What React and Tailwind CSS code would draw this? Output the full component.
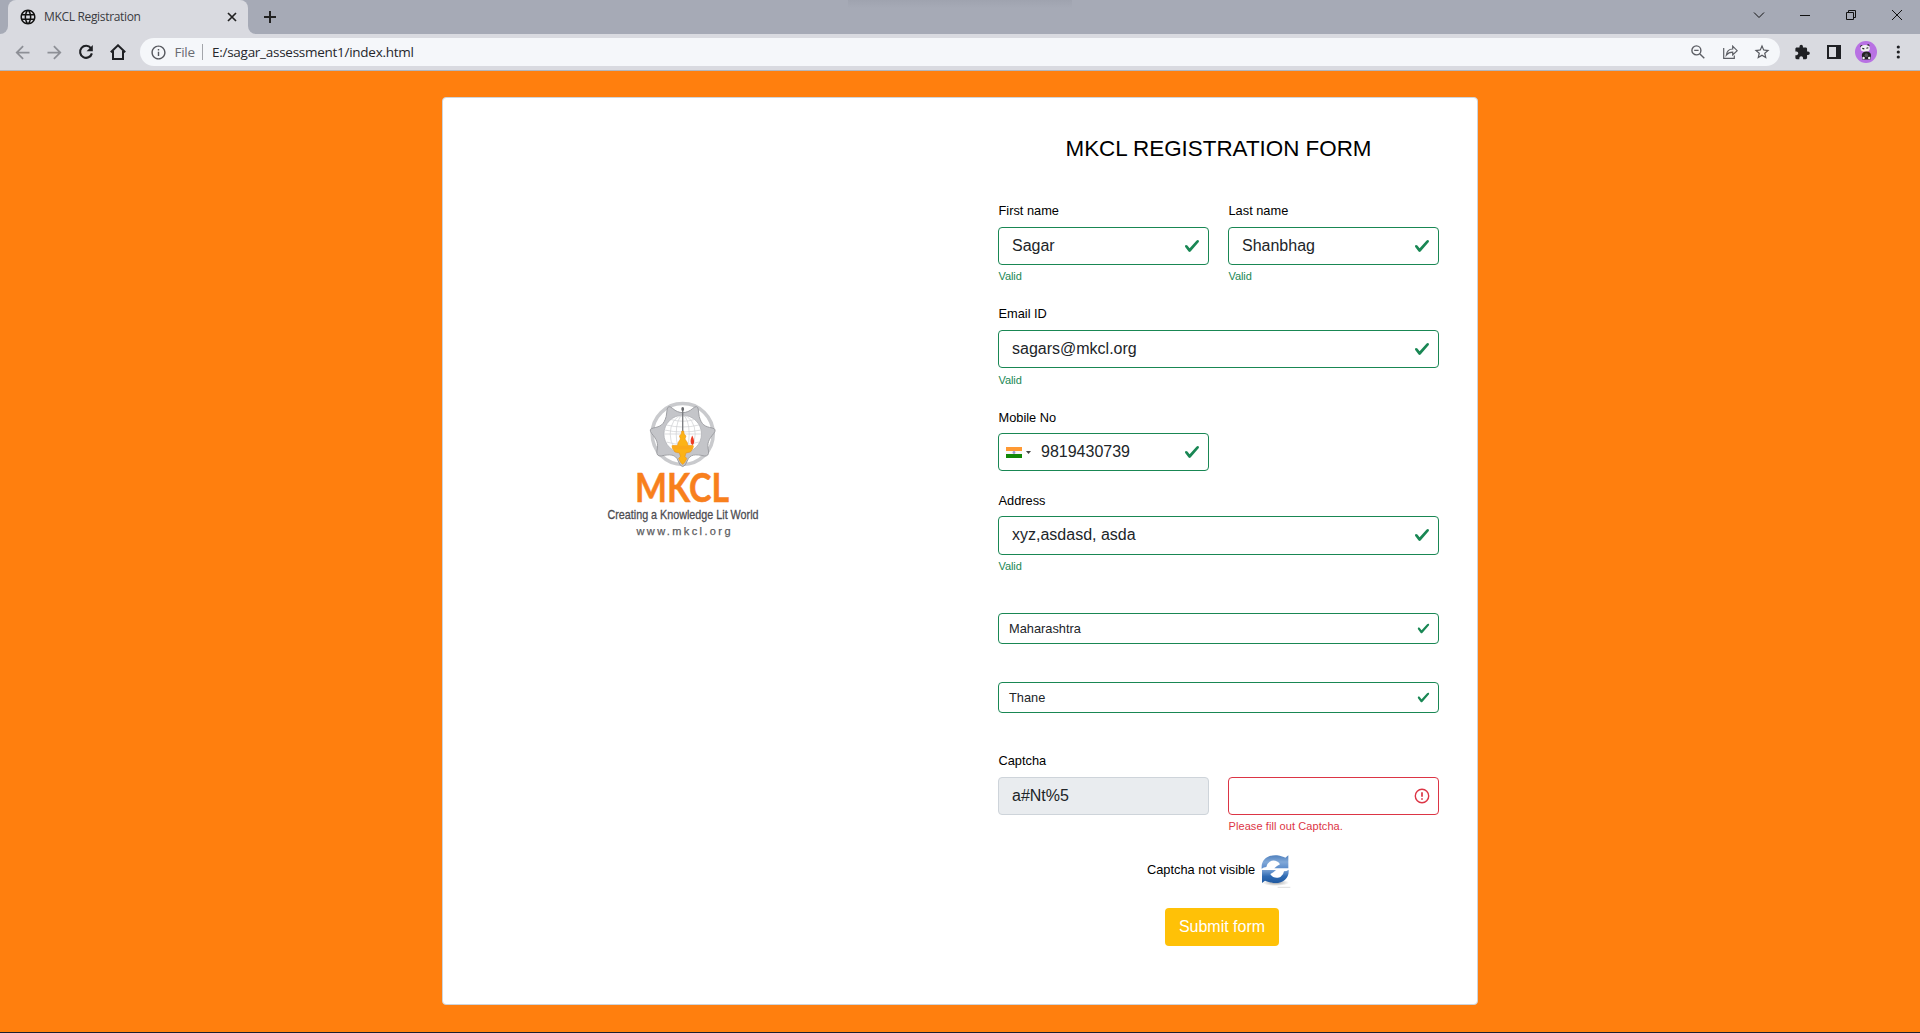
import React from "react";
import {
  MdArrowBack,
  MdArrowForward,
  MdInfoOutline,
  MdLanguage,
  MdStarBorder,
  MdExtension,
} from "react-icons/md";

const UI = "font-['Open_Sans','Noto_Sans',sans-serif]";

function Cell({ children }) {
  return <div className="flex h-7 w-8 shrink-0 items-center justify-center">{children}</div>;
}

function WinCell({ children }) {
  return (
    <div className="flex h-[29px] w-[46px] items-center justify-center">
      <svg width="12" height="12" viewBox="0 0 12 12" fill="none" stroke="#111" strokeWidth="1">
        {children}
      </svg>
    </div>
  );
}

function TabStrip() {
  return (
    <div className="flex h-[34px] items-start bg-[#a6aab6]">
      <div className="h-[34px] w-2 bg-[#d9dae0]">
        <div className="h-[34px] w-2 rounded-br-lg bg-[#a6aab6]" />
      </div>
      <div className="flex h-[34px] w-[240px] items-center rounded-t-lg bg-[#d9dae0] pl-[11px] pr-[10px]">
        <MdLanguage size={18} className="text-[#111]" />
        <span className="ml-[7px] text-[12px] leading-4 tracking-[-0.33px] text-[#3a3b40]">MKCL Registration</span>
        <svg className="ml-auto" width="12" height="12" viewBox="0 0 12 12" stroke="#222" strokeWidth="1.7">
          <path d="M2 2l8 8M10 2l-8 8" />
        </svg>
      </div>
      <div className="h-[34px] w-2 bg-[#d9dae0]">
        <div className="h-[34px] w-2 rounded-bl-lg bg-[#a6aab6]" />
      </div>
      <svg className="ml-2 mt-[11px]" width="12" height="12" viewBox="0 0 12 12" stroke="#222" strokeWidth="2">
        <path d="M6 0v12M0 6h12" />
      </svg>
      <div className="ml-[572px] h-2 w-[224px] bg-linear-to-b from-[#9fa3af] to-[#a6aab6]" />
      <div className="ml-auto flex">
        <WinCell>
          <path d="M1 3.5l5 5 5-5" />
        </WinCell>
        <WinCell>
          <path d="M1 6.5h10" />
        </WinCell>
        <WinCell>
          <path d="M1.5 3.5h7v7h-7zM3.5 3.5v-2h7v7h-2" />
        </WinCell>
        <WinCell>
          <path d="M1 1l10 10M11 1l-10 10" />
        </WinCell>
      </div>
    </div>
  );
}

function Avatar() {
  return (
    <svg width="22" height="22" viewBox="0 0 22 22">
      <circle cx="11" cy="11" r="11" fill="#b871e3" />
      <circle cx="6.6" cy="5.2" r="1.2" fill="#222" />
      <circle cx="13.2" cy="4.4" r="1.2" fill="#222" />
      <ellipse cx="10.2" cy="7.4" rx="4.6" ry="3.3" fill="#f1f1f1" />
      <path d="M7.3 7.4l2 .5M11.4 7.2l1.9-.4" stroke="#222" strokeWidth="1.1" />
      <path d="M6.800 14q.4-3.600 4.600-3.600t4.600 3.600l-.6 4.500H7.400z" fill="#222" />
      <ellipse cx="11.400" cy="14.200" rx="1.700" ry="2" fill="#55505a" />
      <circle cx="8.600" cy="17" r="1.200" fill="#eee" />
      <circle cx="14.200" cy="17" r="1.200" fill="#eee" />
    </svg>
  );
}

function Toolbar() {
  return (
    <div className="flex h-[37px] border-b border-[#b3b5bb] bg-[#d9dae0] px-[6px] pt-1">
      <Cell><MdArrowBack size={21} className="text-[#8d8f96]" /></Cell>
      <Cell><MdArrowForward size={21} className="text-[#8d8f96]" /></Cell>
      <Cell>
        <svg width="16" height="16" viewBox="0 0 16 16" fill="none">
          <path d="M12.900 4.200A6 6 0 1 0 13.900 9.400" stroke="#1f2024" strokeWidth="2.100" />
          <path d="M14.800 1v6.200H8.600z" fill="#1f2024" />
        </svg>
      </Cell>
      <Cell>
        <svg width="16" height="16" viewBox="0 0 16 16" fill="none" stroke="#1f2024" strokeWidth="2">
          <path d="M.8 8.200L8 1.300l7.200 6.900M3 7v8h10V7" />
        </svg>
      </Cell>
      <div className="ml-[6px] flex h-7 w-[1640px] items-center rounded-full bg-[#f5f7fa] pl-[9.500px] pr-0.5">
        <MdInfoOutline size={17} className="text-[#55575d]" />
        <span className="ml-2 mt-px w-[27.500px] text-[13.500px] tracking-[-0.300px] text-[#6a6c72]">File</span>
        <div className="h-4 w-px bg-[#a3a5aa]" />
        <span className="ml-[9px] mt-px text-[13.500px] tracking-[-0.270px] text-[#26272b]">E:/sagar_assessment1/index.html</span>
        <div className="ml-auto flex">
          <Cell>
            <svg width="14" height="14" viewBox="0 0 14 14" fill="none" stroke="#5c5e64" strokeWidth="1.400">
              <circle cx="5.400" cy="5.400" r="4.500" />
              <path d="M8.700 8.700L13.300 13.300M3.200 5.400h4.400" />
            </svg>
          </Cell>
          <Cell>
            <svg width="15" height="14" viewBox="0 0 15 14" fill="none" stroke="#5c5e64" strokeWidth="1.200">
              <path d="M.7 3v10.300h10.600V10.500" />
              <path d="M3.300 10.200C3.800 6 6.500 4 9.700 4V1.200l4.500 4.500-4.500 4.200V7.200C7 7.200 5 8 3.300 10.200z" />
            </svg>
          </Cell>
          <Cell><MdStarBorder size={18} className="text-[#55575d]" /></Cell>
        </div>
      </div>
      <div className="ml-[6px] flex">
        <Cell><MdExtension size={16.500} className="text-[#1f2024]" /></Cell>
        <Cell>
          <svg width="14" height="14" viewBox="0 0 14 14">
            <path fillRule="evenodd" fill="#1f2024" d="M0 0h14v14H0zM2 2v10h7V2z" />
          </svg>
        </Cell>
        <Cell><Avatar /></Cell>
        <Cell>
          <svg width="4" height="14" viewBox="0 0 4 14" fill="#1f2024">
            <circle cx="2.300" cy="2" r="1.600" />
            <circle cx="2.300" cy="7" r="1.600" />
            <circle cx="2.300" cy="12" r="1.600" />
          </svg>
        </Cell>
      </div>
    </div>
  );
}

function Logo() {
  return (
    <svg className="overflow-visible" width="160" height="150" viewBox="0 0 160 150">
      {/* wheel */}
      <circle cx="79.700" cy="37" r="30.500" fill="#fff" stroke="#c9cacd" strokeWidth="3.600" />
      {/* seven-pointed star */}
      <path
        fill="#c4c5c9"
        stroke="#97989d"
        strokeWidth="0.900"
        strokeLinejoin="round"
        transform="translate(-0.300 0)"
        d="M80 69.500Q77.500 69.500 75.500 64C73 57 67 57 58.500 59Q53.500 59.500 54.200 54C56 46 54 42.500 49 36.500Q45.500 32 50.500 31C58 29.500 61 28 63.500 19.500L64.500 12Q65.500 7.500 70 11.500C76 17 84 17 90 11.500Q94.500 7.500 95.500 12L96.500 19.500C99 28 102 29.500 109.500 31Q114.500 32 111 36.500C106 42.500 104 46 105.800 54Q106.500 59.500 101.500 59C93 57 87 57 84.500 64Q82.500 69.500 80 69.500Z"
      />
      {/* globe */}
      <circle cx="79.700" cy="37" r="18.800" fill="#fff" stroke="#b1b2b7" strokeWidth="0.800" />
      <g fill="none" stroke="#cfd0d3" strokeWidth="0.700">
        <ellipse cx="79.700" cy="37" rx="12.500" ry="18.500" />
        <ellipse cx="79.700" cy="37" rx="6.500" ry="18.500" />
        <path d="M61.200 37h37M63.500 28q16 4 32.500 0M68 22.500q12 3.500 23.500 0M63.500 45q16 5 32.500 0M61.500 33q18 4 36.500 0" />
      </g>
      {/* lamp */}
      <path d="M79.700 11v24" stroke="#77787c" strokeWidth="1.300" />
      <ellipse cx="79.700" cy="12" rx="1.400" ry="2" fill="#67686c" />
      <path
        fill="#fcb316"
        stroke="#e98b12"
        strokeWidth="0.500"
        d="M78.700 34h2l.5 3 1.800 2-1 3 2.300 3.500.5 3h5.200v2.500l-2.500 4-4.500 1-1 3.500 1.800 2-2.100 4-2 2-2-2-2.100-4 1.800-2-1-3.500-4.500-1-2.500-4V48.500h5.200l.5-3 2.300-3.500-1-3 1.800-2z"
      />
      <path fill="#fba919" d="M68.500 48.700h22.400l-1.500 3.800H70z" />
      <path fill="#ee3b24" d="M89.300 38.500c-1.800 3.500-2.800 7.500.2 9.500 2.700-2 1.500-5.700-.2-9.500z" />
      <text x="32" y="105.200" textLength="94" lengthAdjust="spacingAndGlyphs" fontFamily="Lato, sans-serif" fontWeight="700" fontSize="40" fill="#f8801d" stroke="#f8801d" strokeWidth="0.500">MKCL</text>
      <text x="4.500" y="121.500" textLength="151" lengthAdjust="spacingAndGlyphs" fontFamily="'Liberation Sans', sans-serif" fontSize="13.500" fill="#4c4c50" stroke="#4c4c50" strokeWidth="0.300">Creating a Knowledge Lit World</text>
      <text x="33.500" y="137.500" textLength="94" fontFamily="'Liberation Sans', sans-serif" fontSize="11" fill="#5c5c60" stroke="#5c5c60" strokeWidth="0.250">www.mkcl.org</text>
    </svg>
  );
}

function Check({ small }) {
  return (
    <svg className="shrink-0" width={small ? 13 : 16} height={small ? 13 : 16} viewBox="0 0 8 8">
      <path
        fill="#198754"
        d="M2.300 6.730.6 4.530c-.4-1.040.46-1.400 1.100-.8l1.100 1.400 3.400-3.800c.6-.63 1.600-.27 1.200.7l-4 4.600c-.43.5-.8.4-1.100.1z"
      />
    </svg>
  );
}

function Label({ children, className = "-mt-px h-[21px]" }) {
  return <label className={`block pl-[0.500px] text-[12.800px] leading-5 text-black ${className}`}>{children}</label>;
}

function Hint({ children, className }) {
  return <p className={`pl-[0.500px] text-[11px] leading-4 ${className}`}>{children}</p>;
}

function Field({ label, value, className = "h-[38px]", labelClass, hintClass = "mt-[3px] h-[17px]" }) {
  return (
    <div className="flex-1">
      <Label className={labelClass}>{label}</Label>
      <div className={`mt-[5px] flex items-center justify-between rounded border border-[#198754] pl-[13px] pr-[8.500px] ${className}`}>
        <span className="text-base text-[#212529]">{value}</span>
        <Check />
      </div>
      <Hint className={`tracking-[-0.100px] text-[#198754] ${hintClass}`}>Valid</Hint>
    </div>
  );
}

function Select({ value }) {
  return (
    <div className="mt-[38px] flex h-[31px] items-center justify-between rounded border border-[#198754] pl-[10px] pr-[8.500px]">
      <span className="mt-px text-[12.800px] text-[#212529]">{value}</span>
      <Check small />
    </div>
  );
}

function RefreshIcon() {
  const arrow = "M2 44C0 18 18 2 48 4C60 6 68 9 73 11L82 4V43H40L48 36L57 31C50 18 34 17 26 23Q17 29 16 39Q8 39 2 44Z";
  return (
    <svg width="30" height="34" viewBox="0 0 90 102">
      <defs>
        <linearGradient id="top" x1="0" y1="0" x2="0" y2="1">
          <stop offset="0" stopColor="#4f80bd" />
          <stop offset="0.500" stopColor="#82a9d8" />
          <stop offset="1" stopColor="#5a8bca" />
        </linearGradient>
        <linearGradient id="bottom" x1="0" y1="0" x2="0" y2="1">
          <stop offset="0" stopColor="#2059a0" />
          <stop offset="0.500" stopColor="#2f6bb3" />
          <stop offset="1" stopColor="#7aa3d6" />
        </linearGradient>
        <radialGradient id="shade">
          <stop offset="0" stopColor="#777" stopOpacity="0.700" />
          <stop offset="1" stopColor="#777" stopOpacity="0" />
        </radialGradient>
      </defs>
      <ellipse cx="44" cy="86" rx="40" ry="10" fill="url(#shade)" />
      <path d={arrow} fill="url(#top)" />
      <path d={arrow} fill="url(#bottom)" transform="rotate(180 42.500 45.500)" />
      <path d="M50 100h38" stroke="#dcdcdc" strokeWidth="3" />
    </svg>
  );
}

function RegistrationForm() {
  return (
    <form className="w-[441px]">
      <h1 className="mt-[35px] h-8 text-center text-[22.400px] leading-8 text-black">MKCL REGISTRATION FORM</h1>
      <div className="mt-[37px] flex gap-[19px]">
        <Field label="First name" value="Sagar" />
        <Field label="Last name" value="Shanbhag" />
      </div>
      <div className="mt-5">
        <Field label="Email ID" value="sagars@mkcl.org" hintClass="mt-1 h-4" />
      </div>
      <div className="mt-5">
        <Label className="h-5">Mobile No</Label>
        <div className="mt-[5px] flex h-[38px] w-[211px] items-center rounded border border-[#198754] pl-[7px] pr-[8.500px]">
          <svg width="16" height="11" viewBox="0 0 16 11">
            <path fill="#ff9933" d="M0 0h16v4H0z" />
            <path fill="#f8f8f8" d="M0 4h16v3H0z" />
            <path fill="#128807" d="M0 7h16v4H0z" />
            <circle cx="8" cy="5.500" r="1.400" fill="#9a9ad0" />
          </svg>
          <svg className="ml-1" width="5" height="3" viewBox="0 0 5 3">
            <path fill="#444" d="M0 0h5L2.500 3z" />
          </svg>
          <span className="ml-[10px] text-base text-[#212529]">9819430739</span>
          <span className="ml-auto"><Check /></span>
        </div>
      </div>
      <div className="mt-5">
        <Field label="Address" value="xyz,asdasd, asda" className="h-[39px] pb-px" labelClass="h-5" />
      </div>
      <Select value="Maharashtra" />
      <Select value="Thane" />
      <div className="mt-[39px]">
        <Label>Captcha</Label>
        <div className="mt-[5px] flex gap-[19px]">
          <div className="flex h-[38px] w-[211px] items-center rounded border border-[#ced4da] bg-[#e9ecef] pl-[13px]">
            <span className="text-base text-[#212529]">a#Nt%5</span>
          </div>
          <div className="w-[211px]">
            <div className="flex h-[38px] items-center justify-end rounded border border-[#dc3545] pr-[8.500px]">
              <svg width="16" height="16" viewBox="0 0 16 16" fill="none" stroke="#dc3545">
                <circle cx="8" cy="8" r="6.700" strokeWidth="1.400" />
                <path d="M8 4.200v4.600M8 10.200v1.600" strokeWidth="1.700" />
              </svg>
            </div>
            <Hint className="mt-[3px] h-[17px] tracking-[0.080px] text-[#dc3545]">Please fill out Captcha.</Hint>
          </div>
        </div>
      </div>
      <div className="mt-[19px] flex h-[34px] pl-[149px]">
        <span className="mt-[6px] w-[114px] text-[12.800px] leading-5 text-black">Captcha not visible</span>
        <RefreshIcon />
      </div>
      <button type="button" className="ml-[167px] mt-5 flex h-[38px] w-[114px] items-center justify-center rounded bg-[#ffc107] text-base text-white">
        Submit form
      </button>
    </form>
  );
}

export default function App() {
  return (
    <div className="flex h-[1033px] w-[1920px] flex-col overflow-hidden border-b border-[#1c2030] bg-[#ff7f0e] font-['Liberation_Sans',Arial,sans-serif]">
      <header className={UI}>
        <TabStrip />
        <Toolbar />
      </header>
      <main className="mx-auto mt-[26px] flex h-[908px] w-[1036px] justify-between rounded border border-[#ced4da] bg-white pl-[160px] pr-[38px]">
        <div className="pt-[299px]">
          <Logo />
        </div>
        <RegistrationForm />
      </main>
    </div>
  );
}
